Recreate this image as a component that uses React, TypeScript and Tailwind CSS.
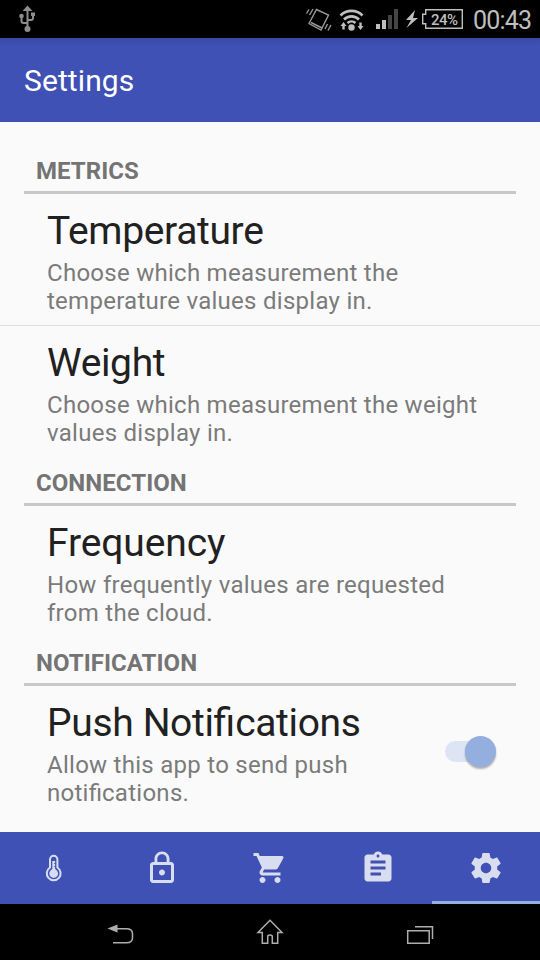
import type { ReactNode } from "react";

function Header({ children }: { children: ReactNode }) {
  return (
    <h2 className="mx-6 h-[49px] border-b-[3px] border-[#c8c8c8] pl-3 pt-3 text-[24px] leading-[28px] font-bold tracking-[0.050px] text-[#747474]">
      {children}
    </h2>
  );
}

function Item({ title, lines, control }: { title: ReactNode; lines: ReactNode[]; control?: ReactNode }) {
  return (
    <div className="flex h-[131px] items-center justify-between pr-[44px] pl-[47px]">
      <div className="h-full pt-[14px] whitespace-nowrap">
        <div className="text-[39px] leading-[46px] tracking-[-0.350px] text-[#212121]">{title}</div>
        <div className="mt-[5px] text-[24px] leading-[28px] tracking-[0.270px] text-[#7b7b7b]">
          {lines.map((line, i) => (
            <div key={i}>{line}</div>
          ))}
        </div>
      </div>
      {control}
    </div>
  );
}

function Toggle() {
  return (
    <div className="flex h-[21px] w-[51px] items-center justify-end rounded-full bg-[#dde4f3]">
      <div className="size-[31px] shrink-0 rounded-full bg-[#95aee0] shadow-[0_2px_2px_rgba(0,0,0,0.3)]" />
    </div>
  );
}

function StatusBar() {
  return (
    <div className="flex h-[38px] items-center bg-black text-[#bebebe]">
      <svg className="ml-[18px]" width="18" height="38" viewBox="18 0 18 38" fill="none" stroke="#8d8d8d" strokeWidth="2">
        <path d="M27.5 8v20M21.5 17v4q0 2 2 2h4M33 15v3q0 2-2 2h-3.5" />
        <path d="M27.5 5.5l5 5.5h-10zM31 12.5h4v3.500h-4z" fill="#8d8d8d" stroke="none" />
        <circle cx="21.5" cy="16" r="2.300" fill="#8d8d8d" stroke="none" />
        <circle cx="27.5" cy="29" r="3" fill="#8d8d8d" stroke="none" />
      </svg>
      <svg className="ml-[264px]" width="164" height="38" viewBox="300 0 164 38" fill="none" stroke="#bebebe" strokeWidth="1.4">
        <g stroke="#999">
          <path d="M316.5 9.5l12 5.5-7.5 15-12-6.5zM311 22.5l11 5.5" />
          <path d="M306.5 13.5l2.5-4M309.5 15l3.5-6M328 30.500l3-5.500M325 29l2.500-5" />
        </g>
        <path d="M340.500 15.500a15.500 15.500 0 0 1 22 0M344 19.500a10.500 10.500 0 0 1 15 0M347.500 23a6 6 0 0 1 8 0" strokeWidth="2.600" />
        <circle cx="351.500" cy="27.500" r="3.200" fill="#bebebe" stroke="none" />
        <path d="M343.500 22l3 4h-1.800v3.500h-2.400v-3.500h-1.800zM360.500 30l3-4h-1.800v-3.500h-2.400v3.500h-1.800z" fill="#bebebe" stroke="none" />
        <g stroke="none" fill="#bebebe">
          <path d="M376 24h4v5h-4zM382 20h4v9h-4z" />
          <path d="M388 15h4v14h-4zM394 9h4v20h-4z" fill="#454545" />
          <path d="M415 10l-9 10h5l-4.500 8 11.500-10h-5z" />
        </g>
        <path d="M425.700 9.700h36.600v18.600h-36.600v-4.500h-3v-9.600h3z" />
        <text x="431" y="25" fill="#bebebe" stroke="none" fontSize="15" fontWeight="500" fontFamily="Roboto, sans-serif" textLength="27">24%</text>
      </svg>
      <span className="ml-[9px] pt-[3px] text-[25px] leading-[35px] tracking-[-0.800px] whitespace-nowrap">00:43</span>
    </div>
  );
}

function Tab({ children, active }: { children: ReactNode; active?: boolean }) {
  return (
    <div className={active ? "flex w-[108px] items-center justify-center border-b-[3px] border-[#95aee0] pt-[3px]" : "flex w-[108px] items-center justify-center"}>
      {children}
    </div>
  );
}

function Icon({ d }: { d: string }) {
  return (
    <svg width="36" height="36" viewBox="0 0 24 24" fill="#d9ddf0">
      <path d={d} />
    </svg>
  );
}

export default function App() {
  return (
    <div className="flex h-[960px] w-[540px] flex-col overflow-hidden bg-[#fafafa] font-[Roboto,sans-serif]">
      <StatusBar />
      <header className="flex h-[84px] shrink-0 items-center bg-[#3f51b5] bg-linear-to-b from-[#3a4aa5] to-[#3f51b5] to-10% pl-6 text-[30px] tracking-[0.100px] text-white">
        <h1>Settings</h1>
      </header>
      <main className="h-[710px] shrink-0 pt-[23px]">
        <Header>METRICS</Header>
        <Item title="Temperature" lines={["Choose which measurement the", "temperature values display in."]} />
        <div className="h-px bg-[#dedede]" />
        <Item title="Weight" lines={["Choose which measurement the weight", "values display in."]} />
        <Header>CONNECTION</Header>
        <Item
          title={<span className="tracking-[-0.100px]">Frequency</span>}
          lines={["How frequently values are requested", "from the cloud."]}
        />
        <Header>NOTIFICATION</Header>
        <Item
          title={<>Push Noti<span className="tracking-normal">fi</span>cations</>}
          lines={["Allow this app to send push", <>noti<span className="tracking-normal">fi</span>cations.</>]}
          control={<Toggle />}
        />
      </main>
      <nav className="flex h-[72px] shrink-0 bg-[#3f51b5]">
        <Tab>
          <svg width="36" height="36" viewBox="36 850 36 36" fill="none" stroke="#d9ddf0" strokeWidth="2">
            <path d="M50 867.500v-8a3.700 3.700 0 0 1 7.400 0v8a6.900 6.900 0 1 1-7.400 0z" />
            <circle cx="53.700" cy="873.500" r="4.400" fill="#d9ddf0" stroke="none" />
            <path d="M53.700 861v10" strokeWidth="2.800" />
            <path d="M54 863.500h1.500M54 866.500h1.500" stroke="#3f51b5" strokeWidth="0.800" />
          </svg>
        </Tab>
        <Tab>
          <Icon d="M12 17c1.100 0 2-.9 2-2s-.9-2-2-2-2 .9-2 2 .9 2 2 2zm6-9h-1V6c0-2.760-2.240-5-5-5S7 3.240 7 6v2H6c-1.100 0-2 .9-2 2v10c0 1.100.9 2 2 2h12c1.100 0 2-.9 2-2V10c0-1.100-.9-2-2-2zM8.900 6c0-1.710 1.390-3.100 3.100-3.100s3.100 1.390 3.100 3.100v2H8.900V6zM18 20H6V10h12v10z" />
        </Tab>
        <Tab>
          <Icon d="M7 18c-1.100 0-1.990.9-1.990 2S5.900 22 7 22s2-.9 2-2-.9-2-2-2zM1 2v2h2l3.600 7.590-1.350 2.450c-.16.280-.25.610-.25.960 0 1.100.9 2 2 2h12v-2H7.420c-.14 0-.25-.11-.25-.25l.03-.12.900-1.630h7.450c.75 0 1.410-.41 1.750-1.030l3.580-6.490A1 1 0 0 0 20 4H5.210l-.94-2H1zm16 16c-1.100 0-1.990.9-1.990 2s.89 2 1.990 2 2-.9 2-2-.9-2-2-2z" />
        </Tab>
        <Tab>
          <Icon d="M19 3h-4.180C14.400 1.840 13.300 1 12 1s-2.400.84-2.820 2H5c-1.100 0-2 .9-2 2v14c0 1.100.9 2 2 2h14c1.100 0 2-.9 2-2V5c0-1.100-.9-2-2-2zm-7 0c.55 0 1 .45 1 1s-.45 1-1 1-1-.45-1-1 .45-1 1-1zm2 14H7v-2h7v2zm3-4H7v-2h10v2zm0-4H7V7h10v2z" />
        </Tab>
        <Tab active>
          <Icon d="M19.430 12.980c.04-.32.070-.64.070-.98s-.03-.66-.07-.98l2.110-1.650c.19-.15.240-.42.120-.64l-2-3.460c-.12-.22-.39-.3-.61-.22l-2.490 1c-.52-.4-1.080-.73-1.690-.98l-.38-2.650C14.460 2.180 14.250 2 14 2h-4c-.25 0-.46.18-.49.420l-.38 2.650c-.61.250-1.170.590-1.690.98l-2.490-1c-.23-.09-.49 0-.61.220l-2 3.460c-.13.220-.07.490.12.640l2.110 1.650c-.04.320-.07.650-.07.980s.03.660.07.980l-2.110 1.650c-.19.150-.24.420-.12.640l2 3.460c.12.220.39.300.61.220l2.490-1c.52.400 1.080.730 1.690.980l.38 2.650c.03.240.24.420.49.420h4c.25 0 .46-.18.490-.42l.38-2.650c.61-.25 1.170-.59 1.690-.98l2.490 1c.23.090.49 0 .61-.22l2-3.460c.12-.22.070-.49-.12-.64l-2.110-1.650zM12 15.500c-1.930 0-3.500-1.570-3.500-3.500s1.570-3.500 3.500-3.500 3.500 1.570 3.500 3.500-1.570 3.500-3.500 3.500z" />
        </Tab>
      </nav>
      <footer className="flex h-14 shrink-0 items-center justify-center bg-black">
        <svg width="340" height="56" viewBox="100 904 340 56" fill="none" stroke="#aeaeae" strokeWidth="1.500">
          <path d="M113 942.800h13.500q6 0 6-5v-4q0-5-6-5H117" />
          <path d="M107.500 928.500l10-4v8z" fill="#aeaeae" stroke="none" />
          <path d="M270 920.200l-12 12.300h4.300v10.700h5.400v-6.700q0-1.500 2.300-1.500t2.300 1.500v6.700h5.400v-10.700h4.300z" />
          <path d="M407.700 930.700h21.500v12.500h-21.500zM415 926.700h17.500V939" />
        </svg>
      </footer>
    </div>
  );
}
